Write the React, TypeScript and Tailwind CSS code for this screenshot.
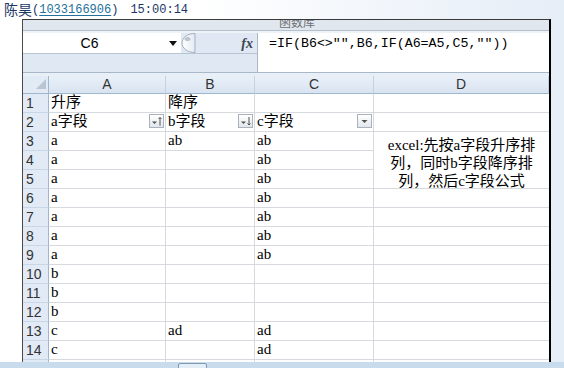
type Row = { a?: string; b?: string; c?: string };

const rows: Row[] = [
  { a: "升序", b: "降序" },
  { a: "a字段", b: "b字段", c: "c字段" },
  { a: "a", b: "ab", c: "ab" },
  { a: "a", c: "ab" },
  { a: "a", c: "ab" },
  { a: "a", c: "ab" },
  { a: "a", c: "ab" },
  { a: "a", c: "ab" },
  { a: "a", c: "ab" },
  { a: "b" },
  { a: "b" },
  { a: "b" },
  { a: "c", b: "ad", c: "ad" },
  { a: "c", c: "ad" },
  {},
];

const cellFont = "font-['Liberation_Serif','Noto_Sans_CJK_SC',serif] text-[15px] leading-[15px] text-black";
const headFont = "font-['Liberation_Sans',sans-serif] text-[14px] text-[#333]";

function FilterButton({ sort }: { sort?: "asc" | "desc" }) {
  return (
    <span className="flex h-[14px] w-[15px] items-center justify-center border border-[#a9b2bd] bg-gradient-to-b from-white to-[#e2e6eb]">
      <svg width="13" height="12" viewBox="0 0 13 12">
        {sort ? (
          <path d="M2 6.5h5L4.5 9z" fill="#505050" />
        ) : (
          <path d="M3.5 5h6L6.5 8z" fill="#505050" />
        )}
        {sort === "asc" && (
          <path d="M10 10.5V2.5M8.5 4L10 2.5 11.5 4" stroke="#505050" strokeWidth="1" fill="none" />
        )}
        {sort === "desc" && (
          <path d="M10 2v8M8.5 8.5L10 10l1.5-1.5" stroke="#505050" strokeWidth="1" fill="none" />
        )}
      </svg>
    </span>
  );
}

function Cell({ text, filter }: { text?: string; filter?: "asc" | "desc" | "plain" }) {
  return (
    <div className={`flex items-end justify-between border-b border-r border-[#d6d9de] bg-white pb-[2px] pl-[2px] ${cellFont}`}>
      <span className="whitespace-nowrap">{text}</span>
      {filter && (
        <span className="mb-[1px] mr-[1px]">
          <FilterButton sort={filter === "plain" ? undefined : filter} />
        </span>
      )}
    </div>
  );
}

export default function App() {
  return (
    <div className="flex h-[368px] w-[564px] flex-col overflow-hidden bg-[linear-gradient(to_right,#ffffff_35%,#e5edf7)]">
      <div className="flex h-[19px] shrink-0 items-center pl-[4px] text-[#1c3766]">
        <span className="font-['Noto_Sans_CJK_SC',sans-serif] text-[14px] leading-[19px]">陈昊</span>
        <span className="font-['Liberation_Mono',monospace] text-[12px]">(</span>
        <span className="font-['Liberation_Mono',monospace] text-[12px] text-[#23709c] underline underline-offset-2">1033166906</span>
        <span className="font-['Liberation_Mono',monospace] text-[12px]">)</span>
        <span className="ml-[12px] font-['Liberation_Mono',monospace] text-[12px]">15:00:14</span>
      </div>

      <div className="flex min-h-0 flex-1 overflow-hidden pl-[22px]">
        <div className="flex w-[529px] flex-col overflow-hidden border-l border-r-2 border-t border-l-[#4a4a4a] border-r-black border-t-[#3a3a3a]">
          <div className="h-[10px] shrink-0 overflow-hidden bg-[#e1e7ee] pl-[256px]">
            <div className="-mt-[5px] font-['Noto_Sans_CJK_SC',sans-serif] text-[12px] leading-[14px] text-[#6b6f75]">函数库</div>
          </div>
          <div className="h-[3px] shrink-0 border-t border-[#b3bfcc] bg-[#eef3f8]" />

          <div className="flex h-[39px] shrink-0">
            <div className="flex w-[234px] flex-col bg-[#dfe8f3]">
              <div className="flex h-[20px] shrink-0 items-center">
                <div className="flex h-full w-[158px] items-center bg-white">
                  <span className="w-[133px] text-center font-['Liberation_Sans',sans-serif] text-[14px] text-black">C6</span>
                  <svg className="ml-[13px]" width="8" height="5" viewBox="0 0 8 5">
                    <path d="M0 0h8L4 5z" fill="#111" />
                  </svg>
                </div>
                <svg className="-ml-[1px]" width="16" height="20" viewBox="0 0 16 20">
                  <defs>
                    <linearGradient id="knob" x1="0" y1="0" x2="1" y2="0">
                      <stop offset="0" stopColor="#ffffff" />
                      <stop offset="1" stopColor="#e4ebf3" />
                    </linearGradient>
                  </defs>
                  <path d="M15 0.5C7 0.5 2 5 2 10s5 9.5 13 9.5z" fill="url(#knob)" stroke="#a3afbd" />
                  <ellipse cx="7.5" cy="6" rx="3" ry="2" fill="#bcc5cf" />
                </svg>
                <span className="ml-auto mr-[4px] font-['Liberation_Serif',serif] text-[14px] font-bold italic text-[#3d4650]">fx</span>
              </div>
              <div className="flex-1 border-t border-[#b8c5d3]" />
            </div>
            <div className="flex-1 border-l border-[#aab7c6] bg-white pl-[11px] pt-[3px] font-['Liberation_Mono',monospace] text-[13.3px] leading-[16px] text-black">
              {'=IF(B6<>"",B6,IF(A6=A5,C5,""))'}
            </div>
          </div>
          <div className="h-[4px] shrink-0 border-t border-[#a9b8c8] bg-[#e9eff6]" />

          <div className="grid shrink-0 grid-cols-[26px_117px_89px_119px_175px] grid-rows-[18px] auto-rows-[19px]">
            <div className="flex items-end justify-end border-b border-r border-b-[#9eb6ce] border-r-[#9eb6ce] bg-[#e2eaf5] pb-[4px] pr-[2px]">
              <svg width="10" height="10" viewBox="0 0 10 10">
                <path d="M10 0v10H0z" fill="#b9c5d3" />
              </svg>
            </div>
            {["A", "B", "C", "D"].map((col) => (
              <div
                key={col}
                className={`flex items-center justify-center border-b border-r border-b-[#9eb6ce] border-r-[#c3d1e1] bg-gradient-to-b from-[#e9f0f8] to-[#d9e4f1] ${headFont}`}
              >
                {col}
              </div>
            ))}

            {rows.map((row, i) => {
              const n = i + 1;
              return [
                <div
                  key={`h${n}`}
                  className={`flex items-center border-b border-r border-b-[#c9d6e5] border-r-[#9eb6ce] bg-[#e2eaf5] pl-[3px] ${headFont}`}
                >
                  {n < 15 ? n : null}
                </div>,
                <Cell key={`a${n}`} text={row.a} filter={n === 2 ? "asc" : undefined} />,
                <Cell key={`b${n}`} text={row.b} filter={n === 2 ? "desc" : undefined} />,
                <Cell key={`c${n}`} text={row.c} filter={n === 2 ? "plain" : undefined} />,
                n === 3 ? (
                  <div
                    key={`d${n}`}
                    className="row-span-3 border-b border-[#d6d9de] bg-white pt-[4px] text-center font-['Liberation_Serif','Noto_Sans_CJK_SC',serif] text-[15px] leading-[18px] text-black"
                  >
                    excel:先按a字段升序排
                    <br />
                    列，同时b字段降序排
                    <br />
                    列，然后c字段公式
                  </div>
                ) : n === 4 || n === 5 ? null : (
                  <div key={`d${n}`} className="border-b border-[#d6d9de] bg-white" />
                ),
              ];
            })}
          </div>
        </div>
      </div>

      <div className="h-[6px] shrink-0 bg-[#c8dcee] pl-[178px] pt-[1px]">
        <div className="h-[6px] w-[29px] rounded-t-[2px] border border-[#7f97b1] bg-[#e4eef8]" />
      </div>
    </div>
  );
}
